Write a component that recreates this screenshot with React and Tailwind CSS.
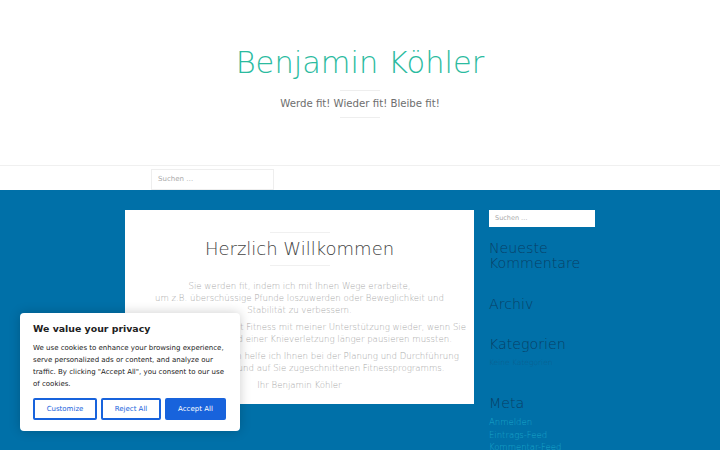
import React from "react";

const dv = { fontFamily: '"DejaVu Sans", sans-serif' };

function Paragraphs() {
  return (
    <div className="text-[8.6px] leading-[12px] text-[#a9a9a9] font-extralight">
      <p>
        Sie werden fit, indem ich mit Ihnen Wege erarbeite,
        <br />
        um z.B. überschüssige Pfunde loszuwerden oder Beweglichkeit und
        <br />
        Stabilität zu verbessern.
      </p>
      <p className="mt-[5px]">
        Sie werden wieder fit, mit Fitness mit meiner Unterstützung wieder, wenn Sie
        <br />
        zum Beispiel aufgrund einer Knieverletzung länger pausieren mussten.
      </p>
      <p className="mt-[5px]">
        Sie bleiben fit, denn ich helfe ich Ihnen bei der Planung und Durchführung
        <br />
        eines individuellen und auf Sie zugeschnittenen Fitnessprogramms.
      </p>
      <p className="mt-[5px]">Ihr Benjamin Köhler</p>
    </div>
  );
}

function CookieBanner() {
  return (
    <div
      className="absolute left-[20px] top-[313px] w-[220px] rounded-[4px] bg-white px-[13px] pt-[9px] pb-[11px] shadow-[0_0_12px_rgba(0,0,0,0.2)]"
      style={dv}
    >
      <h3 className="text-[9.4px] font-bold leading-[14px] text-[#212121]">We value your privacy</h3>
      <p className="mt-[6px] text-[7px] leading-[12px] text-[#212121]">
        We use cookies to enhance your browsing experience, serve personalized ads or content, and analyze our
        traffic. By clicking "Accept All", you consent to our use of cookies.
      </p>
      <div className="mt-[8px] flex gap-[4px]">
        <button className="h-[22px] w-[64px] rounded-[2px] border-2 border-[#1863dc] text-[7px] text-[#1863dc]">
          Customize
        </button>
        <button className="h-[22px] w-[60px] rounded-[2px] border-2 border-[#1863dc] text-[7px] text-[#1863dc]">
          Reject All
        </button>
        <button className="h-[22px] w-[61px] rounded-[2px] border-2 border-[#1863dc] bg-[#1863dc] text-[7px] text-white">
          Accept All
        </button>
      </div>
    </div>
  );
}

export default function App() {
  return (
    <div className="relative h-[450px] w-[720px] overflow-hidden bg-[#0070a8]" style={dv}>
      {/* Header */}
      <header className="flex h-[165px] flex-col items-center bg-white pt-[44px]">
        <h1 className="text-[30.5px] font-extralight leading-[38px] text-[#2bbba0]">Benjamin Köhler</h1>
        <div className="mt-[8px] h-px w-[40px] bg-[#eeeeee]" />
        <p className="mt-[6px] text-[10.2px] leading-[14px] text-[#6e6e6e]">Werde fit! Wieder fit! Bleibe fit!</p>
        <div className="mt-[6px] h-px w-[40px] bg-[#eeeeee]" />
      </header>

      {/* Nav */}
      <nav className="h-[25px] border-t border-[#f0f0f0] bg-white">
        <div className="ml-[151px] mt-[3px] flex h-[21px] w-[123px] items-center border border-[#eeeeee] px-[6px] text-[7px] text-[#aaa]">
          Suchen …
        </div>
      </nav>

      {/* Main */}
      <main className="flex gap-[15px] pl-[125px] pt-[20px]">
        <article className="flex h-[194px] w-[349px] flex-col items-center bg-white pt-[22px] text-center">
          <div className="h-px w-[60px] bg-[#f0f0f0]" />
          <h2 className="mt-[4px] text-[18px] font-extralight leading-[24px] text-[#444]">Herzlich Willkommen</h2>
          <div className="mt-[4px] h-px w-[60px] bg-[#f0f0f0]" />
          <div className="mt-[14px]">
            <Paragraphs />
          </div>
        </article>

        <aside className="w-[106px]">
          <div className="flex h-[17px] items-center bg-white px-[6px] text-[6.5px] text-[#aaa]">Suchen …</div>
          <div className="font-extralight text-[#083f66]">
            <h4 className="mt-[14px] text-[14.2px] leading-[15px]">Neueste Kommentare</h4>
            <h4 className="mt-[26px] text-[14.2px] leading-[15px]">Archiv</h4>
            <h4 className="mt-[25px] text-[14.2px] leading-[15px]">Kategorien</h4>
            <p className="mt-[6px] text-[7.5px] leading-[10px] text-[#0b5d8c]">Keine Kategorien</p>
            <h4 className="mt-[28px] text-[14.2px] leading-[15px]">Meta</h4>
          </div>
          <ul className="mt-[5px] text-[8.5px] font-extralight leading-[12.5px] text-[#1aa6c8]">
            <li>Anmelden</li>
            <li>Eintrags-Feed</li>
            <li>Kommentar-Feed</li>
          </ul>
        </aside>
      </main>

      <CookieBanner />
    </div>
  );
}
